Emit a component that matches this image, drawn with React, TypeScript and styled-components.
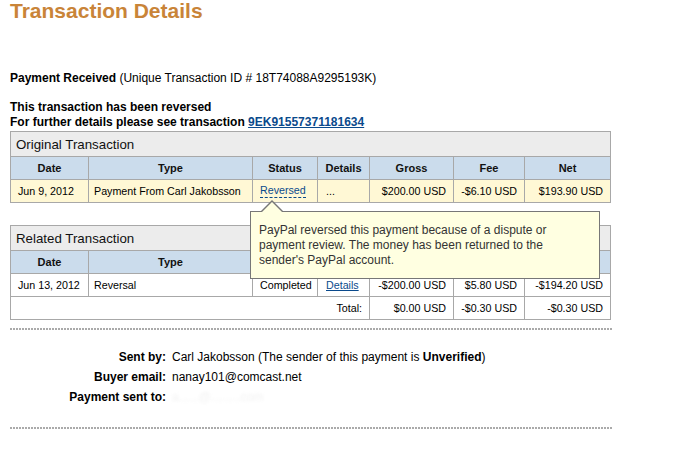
import styled, { createGlobalStyle } from "styled-components";

const GlobalStyle = createGlobalStyle`
  body {
    margin: 0;
    background: #fff;
    font-family: "Liberation Sans", Arial, sans-serif;
    color: #000;
  }
`;

const cols = [78, 164, 65, 52, 84, 71, 86];

const App = () => {
  return (
    <Page>
      <GlobalStyle />
      <Title>Transaction Details</Title>
      <Intro>
        <strong>Payment Received</strong> (Unique Transaction ID # 18T74088A9295193K)
      </Intro>
      <Notice>
        This transaction has been reversed
        <br />
        For further details please see transaction <Link href="#">9EK91557371181634</Link>
      </Notice>

      <Table>
        <colgroup>
          {cols.map((w, i) => (
            <col key={i} style={{ width: w }} />
          ))}
        </colgroup>
        <tbody>
          <tr>
            <Caption colSpan={7}>Original Transaction</Caption>
          </tr>
          <HeadRow>
            <th>Date</th>
            <th>Type</th>
            <th>Status</th>
            <th>Details</th>
            <th>Gross</th>
            <th>Fee</th>
            <th>Net</th>
          </HeadRow>
          <DataRow $tone="yellow">
            <Cell $pad={7}>Jun 9, 2012</Cell>
            <Cell $pad={5}>Payment From Carl Jakobsson</Cell>
            <Cell $pad={7}>
              <StatusTip>
                Reversed
                <Tooltip>
                  PayPal reversed this payment because of a dispute or payment review. The money
                  has been returned to the sender's PayPal account.
                </Tooltip>
              </StatusTip>
            </Cell>
            <Cell $pad={8}>...</Cell>
            <Amount>$200.00 USD</Amount>
            <Amount>-$6.10 USD</Amount>
            <Amount>$193.90 USD</Amount>
          </DataRow>
        </tbody>
      </Table>

      <Table $gap>
        <colgroup>
          {cols.map((w, i) => (
            <col key={i} style={{ width: w }} />
          ))}
        </colgroup>
        <tbody>
          <tr>
            <Caption colSpan={7}>Related Transaction</Caption>
          </tr>
          <HeadRow>
            <th>Date</th>
            <th>Type</th>
            <th>Status</th>
            <th>Details</th>
            <th>Gross</th>
            <th>Fee</th>
            <th>Net</th>
          </HeadRow>
          <DataRow>
            <Cell $pad={7}>Jun 13, 2012</Cell>
            <Cell $pad={5}>Reversal</Cell>
            <Cell $pad={7}>Completed</Cell>
            <Cell $pad={8}>
              <Link href="#">Details</Link>
            </Cell>
            <Amount>-$200.00 USD</Amount>
            <Amount>$5.80 USD</Amount>
            <Amount>-$194.20 USD</Amount>
          </DataRow>
          <DataRow>
            <Amount colSpan={4}>Total:</Amount>
            <Amount>$0.00 USD</Amount>
            <Amount>-$0.30 USD</Amount>
            <Amount>-$0.30 USD</Amount>
          </DataRow>
        </tbody>
      </Table>

      <Dots />
      <Details>
        <Label>Sent by:</Label>
        <Value>
          Carl Jakobsson (The sender of this payment is <strong>Unverified</strong>)
        </Value>
        <Label>Buyer email:</Label>
        <Value>nanay101@comcast.net</Value>
        <Label>Payment sent to:</Label>
        <Value $hidden>a......@.........com</Value>
      </Details>
      <Dots />
    </Page>
  );
};

export default App;

const Page = styled.div`
  width: 684px;
  height: 457px;
  padding: 0 10px;
  box-sizing: border-box;
  overflow: hidden;
`;

const Title = styled.h1`
  margin: 0;
  font-size: 21px;
  line-height: 21px;
  font-weight: bold;
  color: #c98438;
`;

const Intro = styled.p`
  margin: 50px 0 0;
  font-size: 12px;
  line-height: 15px;
`;

const Notice = styled.p`
  margin: 14px 0 0;
  font-size: 12px;
  line-height: 15px;
  font-weight: bold;
`;

const Link = styled.a`
  color: #0a4a8c;
  text-decoration: underline;
`;

const Table = styled.table<{ $gap?: boolean }>`
  width: 601px;
  margin-top: ${({ $gap }) => ($gap ? "22px" : "1px")};
  border-collapse: collapse;
  table-layout: fixed;
  border: 1px solid #a8a8a8;

  td,
  th {
    border: 1px solid #a8a8a8;
    padding: 0;
  }
`;

const Caption = styled.th`
  height: 24px;
  background: #ececec;
  text-align: left;
  font-weight: normal;
  font-size: 13.3px;
  padding-left: 5px !important;
  color: #111;
`;

const HeadRow = styled.tr`
  height: 23px;
  background: #cbdcec;

  th {
    font-size: 11px;
    font-weight: bold;
    text-align: center;
    color: #111;
  }
`;

const DataRow = styled.tr<{ $tone?: "yellow" }>`
  height: 23px;
  background: ${({ $tone }) => ($tone === "yellow" ? "#fff8d5" : "#fff")};
`;

const Cell = styled.td<{ $pad: number }>`
  font-size: 10.7px;
  text-align: left;
  padding-left: ${({ $pad }) => $pad}px !important;
  white-space: nowrap;
`;

const Amount = styled.td`
  font-size: 10.7px;
  text-align: right;
  padding-right: 7px !important;
  white-space: nowrap;
`;

const StatusTip = styled.span`
  position: relative;
  display: inline-block;
  color: #0a4a8c;
  line-height: 13px;
  border-bottom: 1px dashed #0a4a8c;
`;

const Tooltip = styled.span`
  position: absolute;
  left: -10px;
  top: 27px;
  z-index: 2;
  width: 331px;
  padding: 11px 9px 10px 8px;
  background: #ffffe1;
  border: 1px solid #777;
  color: #333;
  font-size: 12px;
  line-height: 15px;
  white-space: normal;
  text-align: left;

  &::before,
  &::after {
    content: "";
    position: absolute;
    left: 10px;
    border-style: solid;
    border-color: transparent;
  }

  &::before {
    top: -12px;
    border-width: 0 11px 11px;
    border-bottom-color: #777;
  }

  &::after {
    top: -10px;
    border-width: 0 10px 10px;
    left: 11px;
    border-bottom-color: #ffffe1;
  }
`;

const Dots = styled.div`
  width: 602px;
  height: 2px;
  margin-top: 8px;
  background-image: linear-gradient(to right, #aaa 2px, transparent 2px);
  background-size: 3px 2px;
`;

const Details = styled.div`
  display: grid;
  grid-template-columns: 156px auto;
  column-gap: 6px;
  row-gap: 5px;
  padding: 20px 0 14px;
  font-size: 12px;
  line-height: 15px;
`;

const Label = styled.div`
  text-align: right;
  font-weight: bold;
`;

const Value = styled.div<{ $hidden?: boolean }>`
  color: ${({ $hidden }) => ($hidden ? "#f2f2f2" : "#000")};
  filter: ${({ $hidden }) => ($hidden ? "blur(1.5px)" : "none")};
`;
